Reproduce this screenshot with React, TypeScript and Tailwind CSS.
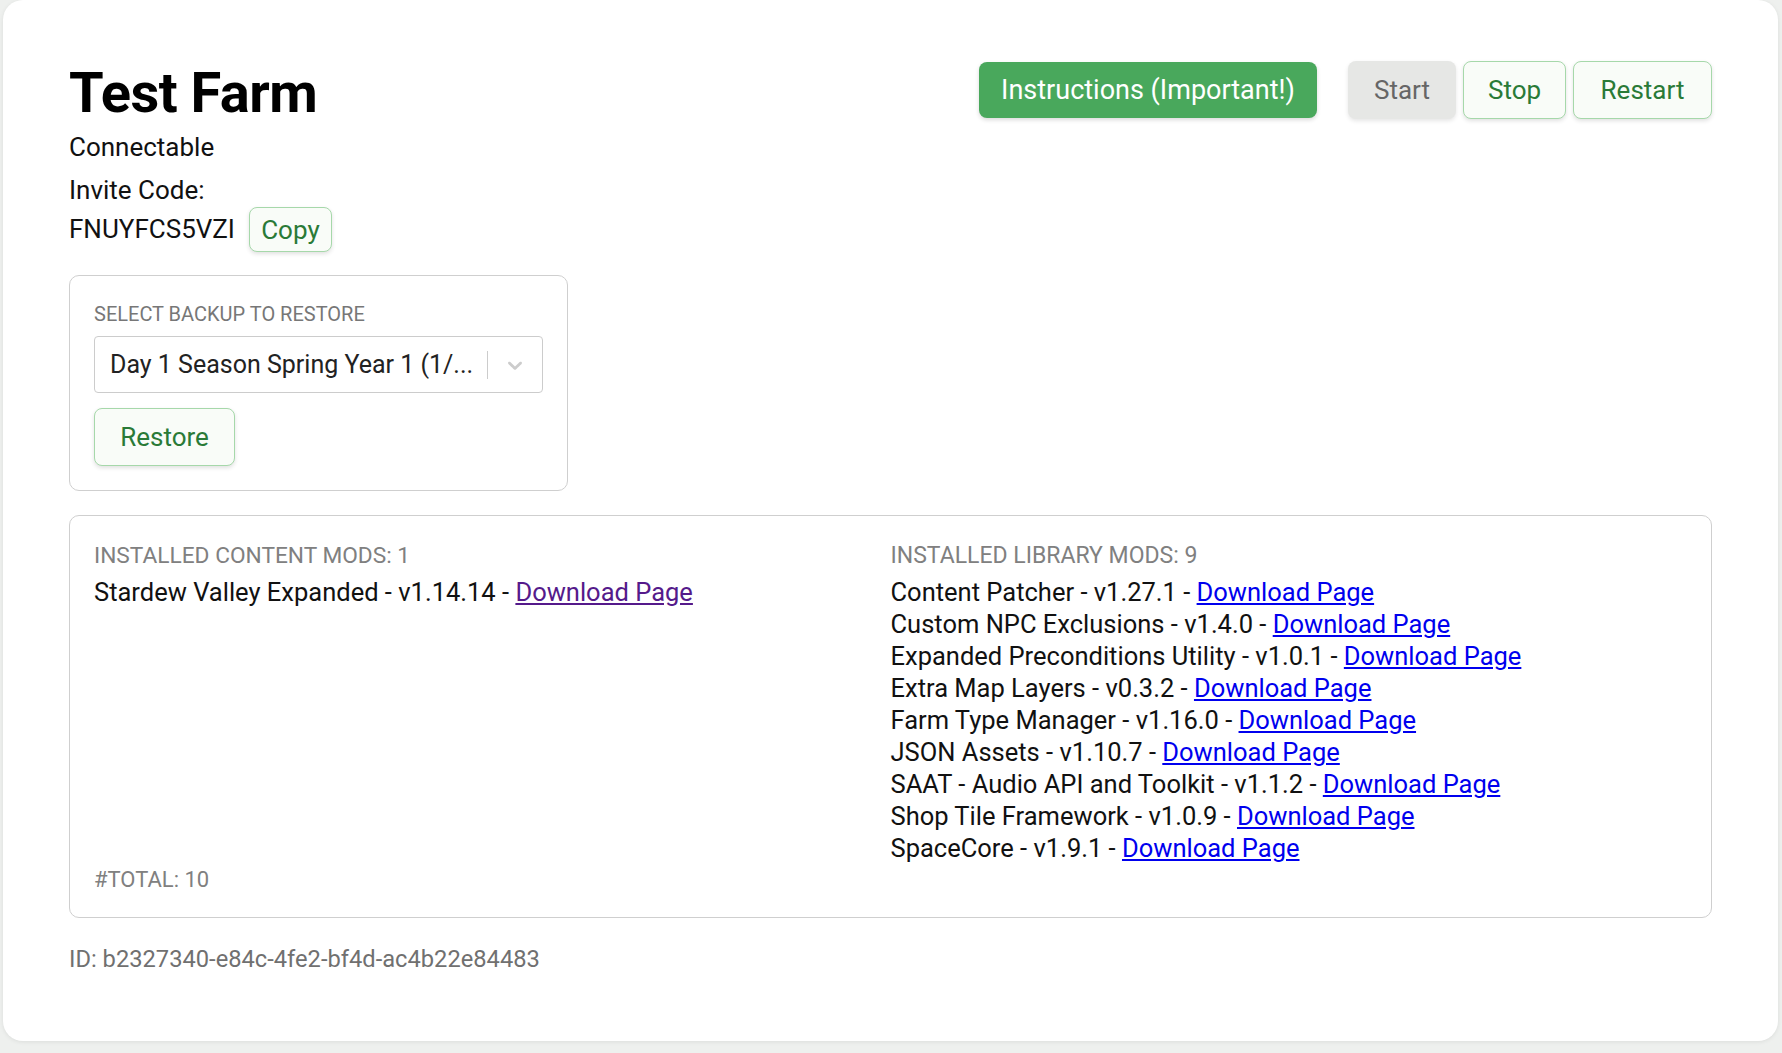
import React from 'react';

const LIBRARY_MODS = [
  { name: 'Content Patcher', version: 'v1.27.1' },
  { name: 'Custom NPC Exclusions', version: 'v1.4.0' },
  { name: 'Expanded Preconditions Utility', version: 'v1.0.1' },
  { name: 'Extra Map Layers', version: 'v0.3.2' },
  { name: 'Farm Type Manager', version: 'v1.16.0' },
  { name: 'JSON Assets', version: 'v1.10.7' },
  { name: 'SAAT - Audio API and Toolkit', version: 'v1.1.2' },
  { name: 'Shop Tile Framework', version: 'v1.0.9' },
  { name: 'SpaceCore', version: 'v1.9.1' },
];

const outlineBtn =
  'rounded-[8px] border border-[#a6d8aa] bg-[#f9fcf8] text-[#2a7a37] shadow-[0_2px_4px_rgba(0,0,0,0.12)]';

export default function App() {
  return (
    <div
      className="min-h-screen bg-[#eef0ee] pl-[3px] pr-[4px] pb-[14px] text-[#111]"
      style={{ fontFamily: 'Roboto, "Noto Sans", sans-serif' }}
    >
      <div className="rounded-[20px] bg-white px-[66px] pt-[61px] pb-[66px] shadow-[0_1px_4px_rgba(0,0,0,0.08)]">
        {/* Header */}
        <div className="flex items-start justify-between">
          <div>
            <h1 className="text-[56px] font-bold leading-[64px] tracking-[-0.5px] text-black">Test Farm</h1>
            <div className="mt-[3px] text-[26px] leading-[38px]">Connectable</div>
            <div className="mt-[7px] text-[26px] leading-[34px]">Invite Code:</div>
            <div className="flex h-[45px] items-center gap-[14px]">
              <span className="text-[26px]">FNUYFCS5VZI</span>
              <button className={`${outlineBtn} h-[45px] w-[83px] text-[26px] leading-none`}>Copy</button>
            </div>
          </div>

          <div className="flex items-center">
            <button className="h-[56px] w-[338px] rounded-[8px] bg-[#49a85c] text-[27px] text-white shadow-[0_2px_4px_rgba(0,0,0,0.15)]">
              Instructions (Important!)
            </button>
            <div className="ml-[31px] flex gap-[7px]">
              <button className="h-[58px] w-[108px] rounded-[8px] bg-[#e6e7e5] text-[26px] text-[#666] shadow-[0_2px_4px_rgba(0,0,0,0.1)]">
                Start
              </button>
              <button className={`${outlineBtn} h-[58px] w-[103px] text-[26px]`}>Stop</button>
              <button className={`${outlineBtn} h-[58px] w-[139px] text-[26px]`}>Restart</button>
            </div>
          </div>
        </div>

        {/* Backup restore */}
        <div className="mt-[23px] w-[499px] rounded-[10px] border border-[#cfcfcf] p-[24px]">
          <div className="text-[20px] leading-[28px] text-[#777]">SELECT BACKUP TO RESTORE</div>
          <div className="mt-[8px] flex h-[57px] items-center rounded-[4px] border border-[#cccccc] pl-[15px]">
            <span className="flex-1 truncate text-[25px] text-[#222]">Day 1 Season Spring Year 1 (1/...</span>
            <span className="h-[28px] w-px bg-[#cccccc]" />
            <span className="flex w-[54px] items-center justify-center text-[#cccccc]">
              <svg width="24" height="24" viewBox="0 0 20 20" fill="currentColor">
                <path d="M4.516 7.548c0.436-0.446 1.043-0.481 1.576 0l3.908 3.747 3.908-3.747c0.533-0.481 1.141-0.446 1.574 0 0.436 0.445 0.408 1.197 0 1.615-0.406 0.418-4.695 4.502-4.695 4.502-0.217 0.223-0.502 0.335-0.787 0.335s-0.57-0.112-0.789-0.335c0 0-4.287-4.084-4.695-4.502s-0.436-1.17 0-1.615z" />
              </svg>
            </span>
          </div>
          <button className={`${outlineBtn} mt-[15px] h-[58px] w-[141px] text-[26px]`}>Restore</button>
        </div>

        {/* Mods */}
        <div className="mt-[24px] grid grid-cols-2 rounded-[10px] border border-[#cfcfcf] px-[24px] pt-[25px] pb-[22px]">
          <div className="flex flex-col">
            <div className="text-[22.7px] leading-[30px] text-[#808080]">INSTALLED CONTENT MODS: 1</div>
            <div className="mt-[5px] text-[25.5px] leading-[32px]">
              Stardew Valley Expanded - v1.14.14 -{' '}
              <a href="#" className="text-[#551a8b] underline">Download Page</a>
            </div>
            <div className="mt-auto text-[22px] leading-[30px] text-[#808080]">#TOTAL: 10</div>
          </div>
          <div>
            <div className="text-[23px] leading-[30px] text-[#808080]">INSTALLED LIBRARY MODS: 9</div>
            <div className="mt-[5px] mb-[31px]">
              {LIBRARY_MODS.map((m) => (
                <div key={m.name} className="text-[25.5px] leading-[32px]">
                  {m.name} - {m.version} -{' '}
                  <a href="#" className="text-[#0000ee] underline">Download Page</a>
                </div>
              ))}
            </div>
          </div>
        </div>

        <div className="mt-[25px] text-[23.7px] leading-[32px] text-[#707070]">
          ID: b2327340-e84c-4fe2-bf4d-ac4b22e84483
        </div>
      </div>
    </div>
  );
}
